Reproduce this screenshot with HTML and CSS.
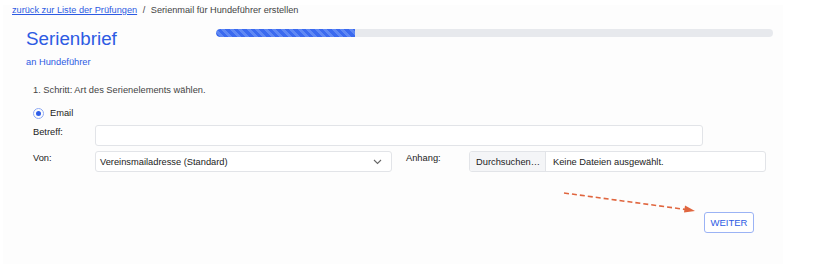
FILE: index.html
```html
<!DOCTYPE html>
<html lang="de">
<head>
<meta charset="utf-8">
<link rel="stylesheet" href="styles.css">
</head>
<body>
<div class="card">
  <div class="breadcrumb"><a href="#">zurück zur Liste der Prüfungen</a> <span class="sep">/</span> Serienmail für Hundeführer erstellen</div>
  <div class="header">
    <div class="titles">
      <h1>Serienbrief</h1>
      <div class="sub">an Hundeführer</div>
    </div>
    <div class="progress"><div class="bar" style="width:25%"></div></div>
  </div>
  <div class="form">
    <div class="step">1. Schritt: Art des Serienelements wählen.</div>
    <label class="radio"><span class="dot"></span>Email</label>
    <div class="row">
      <div class="label">Betreff:</div>
      <div class="input subject"></div>
    </div>
    <div class="row">
      <div class="label">Von:</div>
      <div class="input select">Vereinsmailadresse (Standard)
        <svg class="chev" width="9" height="6" viewBox="0 0 9 6"><path d="M1 1l3.5 3.5L8 1" fill="none" stroke="#666" stroke-width="1.1"/></svg>
      </div>
      <div class="label label2">Anhang:</div>
      <div class="input file"><span class="browse">Durchsuchen…</span><span class="none">Keine Dateien ausgewählt.</span></div>
    </div>
    <div class="actions">
      <button class="next">WEITER</button>
    </div>
  </div>
  <svg class="arrow" width="140" height="24" viewBox="0 0 140 24"><path d="M2 2L124 18.5" stroke="#e0663f" stroke-width="1.6" stroke-dasharray="5 3" fill="none"/><path d="M133 20L123 14.5L122 21.5Z" fill="#e0663f"/></svg>
</div>
</body>
</html>
```
FILE: styles.css
```css
html, body { margin: 0; padding: 0; background: #fff; }
body { font-family: "Liberation Sans", Arial, sans-serif; color: #333; width: 816px; height: 266px; overflow: hidden; }
.card { position: relative; margin: 7px 0 0 3px; width: 780px; height: 259px; background: #fdfdfd; }
.breadcrumb { font-size: 9.2px; line-height: 10px; height: 10px; padding-left: 9px; margin-top: -2px; color: #444; }
.breadcrumb a { color: #2d5be3; text-decoration: underline; }
.breadcrumb .sep { margin: 0 3px; }
.header { display: flex; align-items: flex-start; margin-top: 12px; }
.titles { padding-left: 23px; width: 190px; }
h1 { margin: 0; font-weight: normal; font-size: 18.8px; line-height: 24px; color: #2d5be3; }
.sub { font-size: 9.3px; color: #2d5be3; margin-top: 6px; }
.progress { margin-left: 0; margin-top: 2px; width: 557px; height: 8px; border-radius: 4px; background: #e7e9ed; overflow: hidden; }
.bar { height: 100%; border-radius: 4px 0 0 4px; background: repeating-linear-gradient(45deg, #3b6aef 0 3px, #5f88f4 3px 6px); }
.form { padding-left: 30px; margin-top: 17px; font-size: 9.3px; }
.step { color: #444; line-height: 12px; }
.radio { display: flex; align-items: center; gap: 6px; margin-top: 11px; color: #222; line-height: 12px; }
.dot { width: 9px; height: 9px; border: 1px solid #8ca8f4; border-radius: 50%; display: flex; align-items: center; justify-content: center; }
.dot::after { content: ""; width: 5px; height: 5px; border-radius: 50%; background: #2e5ee8; }
.row { display: flex; margin-top: 5px; }
.radio + .row { margin-top: 6px; }
.label { width: 62px; padding-top: 2px; color: #222; }
.label2 { width: 63px; margin-left: 14px; }
.input { box-sizing: border-box; height: 21px; border: 1px solid #e2e4e8; border-radius: 3px; background: #fff; display: flex; align-items: center; color: #222; }
.subject { width: 608px; }
.select { width: 297px; padding: 0 8px 0 4px; justify-content: space-between; }
.chev { margin-right: 1px; }
.file { width: 297px; overflow: hidden; }
.browse { height: 100%; display: flex; align-items: center; padding: 0 6px; background: #f4f5f7; border-right: 1px solid #e2e4e8; width: 76px; box-sizing: border-box; }
.none { padding-left: 7px; }
.actions { display: flex; justify-content: flex-end; width: 721px; margin-top: 40px; }
.next { box-sizing: border-box; width: 50px; height: 21px; border: 1px solid #9bb3f5; border-radius: 3px; background: #fff; color: #2d5be3; font-family: inherit; font-size: 9.5px; padding: 0; }
.arrow { position: absolute; left: 559px; top: 186px; }
```
